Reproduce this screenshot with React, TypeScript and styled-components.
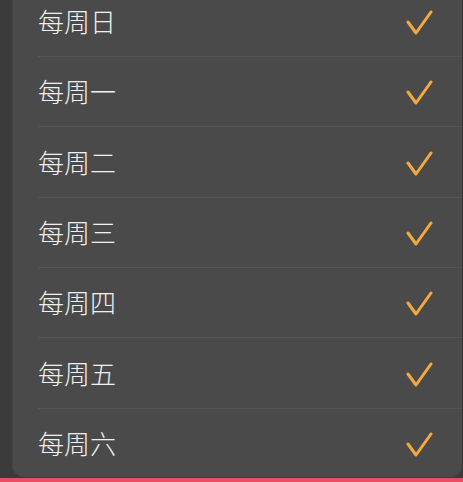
import React from "react";
import styled, { createGlobalStyle } from "styled-components";

const Global = createGlobalStyle`
  html, body { margin: 0; padding: 0; background: #3b3b3b; overflow: hidden; }
  #root { height: 482px; }
`;

const Screen = styled.div`
  height: 482px;
  display: flex;
  flex-direction: column;
  background: #3b3b3b;
`;

const Panel = styled.div`
  flex: 1;
  margin: 0 1px 1px 12px;
  background: #4a4a4a;
  border-left: 1px solid #444;
  border-radius: 0 0 12px 12px;
  overflow: hidden;
`;

const List = styled.div`
  margin-top: -13.3px;
  display: flex;
  flex-direction: column;
`;

const Row = styled.div`
  height: 70.33px;
  box-sizing: border-box;
  margin-left: 25px;
  padding-right: 29px;
  display: flex;
  align-items: center;
  justify-content: space-between;
  border-bottom: ${(p: { $last?: boolean }) => (p.$last ? "none" : "1px solid #555555")};
`;

const Label = styled.span`
  font-family: "Noto Sans CJK SC", "Noto Sans", sans-serif;
  font-size: 26px;
  font-weight: 300;
  color: #f1f1f1;
  line-height: 1;
  margin-top: -1px;
`;

const Check = styled.svg`
  width: 28px;
  height: 28px;
  display: block;
  margin-top: 3px;
`;

const Bar = styled.div`
  height: 4px;
  background: #ea4e61;
`;

const days = ["每周日", "每周一", "每周二", "每周三", "每周四", "每周五", "每周六"];

export default function App() {
  return (
    <>
      <Global />
      <Screen>
        <Panel>
          <List>
            {days.map((d, i) => (
              <Row key={d} $last={i === days.length - 1}>
                <Label>{d}</Label>
                <Check viewBox="0 0 28 28">
                  <path
                    d="M3 13 L11 24 L26 3"
                    fill="none"
                    stroke="#f4a93c"
                    strokeWidth={3}
                    strokeLinecap="round"
                    strokeLinejoin="round"
                  />
                </Check>
              </Row>
            ))}
          </List>
        </Panel>
        <Bar />
      </Screen>
    </>
  );
}
